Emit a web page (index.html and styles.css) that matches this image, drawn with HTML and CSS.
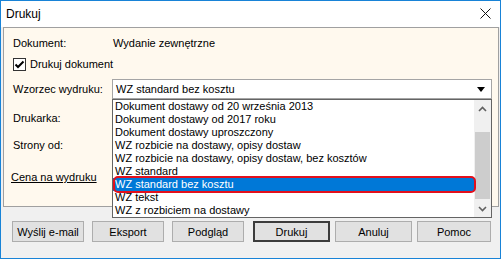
FILE: index.html
```html
<!DOCTYPE html>
<html lang="pl">
<head>
    <meta charset="UTF-8">
    <title>Drukuj</title>
    <link rel="stylesheet" href="styles.css">
</head>
<body>
<div class="window">
    <!-- pasek tytułu -->
    <div class="titlebar">
        <span class="title">Drukuj</span>
        <svg class="close" width="11" height="11" viewBox="0 0 11 11">
            <path d="M0.5 0.5 L10.5 10.5 M10.5 0.5 L0.5 10.5" stroke="#111" stroke-width="1" fill="none"/>
        </svg>
    </div>

    <!-- formularz -->
    <div class="panel">
        <div class="row row-doc">
            <span class="label">Dokument:</span>
            <span class="value">Wydanie zewnętrzne</span>
        </div>
        <div class="row row-check">
            <span class="checkbox">
                <svg width="11" height="11" viewBox="0 0 11 11">
                    <path d="M1.5 5.5 L4 8 L9.5 2.5" stroke="#000" stroke-width="2" fill="none"/>
                </svg>
            </span>
            <span>Drukuj dokument</span>
        </div>
        <div class="row row-template">
            <span class="label">Wzorzec wydruku:</span>
            <div class="combo">
                <span>WZ standard bez kosztu</span>
                <span class="arrow"></span>
            </div>
        </div>
        <div class="row row-printer">
            <span class="label">Drukarka:</span>
        </div>
        <div class="row row-pages">
            <span class="label">Strony od:</span>
        </div>
        <div class="row row-price">
            <span class="link">Cena na wydruku</span>
        </div>

        <!-- rozwinięta lista wzorców -->
        <div class="dropdown">
            <ul class="options">
                <li>Dokument dostawy od 20 września 2013</li>
                <li>Dokument dostawy od 2017 roku</li>
                <li>Dokument dostawy uproszczony</li>
                <li>WZ rozbicie na dostawy, opisy dostaw</li>
                <li>WZ rozbicie na dostawy, opisy dostaw, bez kosztów</li>
                <li>WZ standard</li>
                <li class="selected">WZ standard bez kosztu</li>
                <li>WZ tekst</li>
                <li>WZ z rozbiciem na dostawy</li>
            </ul>
            <div class="scrollbar">
                <span class="scroll-btn">
                    <svg width="9" height="6" viewBox="0 0 9 6">
                        <path d="M1 5 L4.5 1.5 L8 5" stroke="#606060" stroke-width="1.6" fill="none"/>
                    </svg>
                </span>
                <div class="track"><div class="thumb"></div></div>
                <span class="scroll-btn">
                    <svg width="9" height="6" viewBox="0 0 9 6">
                        <path d="M1 1 L4.5 4.5 L8 1" stroke="#606060" stroke-width="1.6" fill="none"/>
                    </svg>
                </span>
            </div>
        </div>
    </div>

    <!-- przyciski -->
    <div class="footer">
        <button class="btn">Wyślij e-mail</button>
        <button class="btn">Eksport</button>
        <button class="btn">Podgląd</button>
        <button class="btn btn-default">Drukuj</button>
        <button class="btn btn-wide">Anuluj</button>
        <button class="btn btn-help">Pomoc</button>
    </div>
</div>
</body>
</html>
```

FILE: styles.css
```css
body {
    margin: 0;
    font-family: "Liberation Sans", Arial, sans-serif;
    font-size: 11px;
    color: #000;
}
.window {
    width: 501px;
    height: 259px;
    box-sizing: border-box;
    border: 1px solid #1883d7;
    background-color: #f0f0f0;
    display: flex;
    flex-direction: column;
}
.titlebar {
    height: 26px;
    background-color: #fff;
    display: flex;
    align-items: center;
    justify-content: space-between;
    padding: 0 9px 0 5px;
}
.title {
    font-size: 12px;
}
.close {
    margin-top: -1px;
}
.panel {
    position: relative;
    height: 180px;
    box-sizing: border-box;
    margin: 0 1px 0 2px;
    border: 1px solid #a0a0a0;
    background-color: #fff9ee;
    padding: 7px 0 0 9px;
    display: flex;
    flex-direction: column;
}
.row {
    display: flex;
    align-items: center;
    height: 16px;
}
.label {
    width: 99px;
    flex-shrink: 0;
}
.value {
    margin-left: 1px;
}
.row-check {
    margin-top: 5px;
}
.row-template {
    margin-top: 7px;
    height: 20px;
}
.row-printer {
    margin-top: 11px;
}
.row-pages {
    margin-top: 11px;
}
.row-price {
    margin-top: 16px;
}
.checkbox {
    width: 13px;
    height: 13px;
    box-sizing: border-box;
    border: 1px solid #333;
    background-color: #fff;
    display: flex;
    align-items: center;
    justify-content: center;
    margin-right: 4px;
}
.combo {
    width: 380px;
    height: 20px;
    box-sizing: border-box;
    border: 1px solid #a5a5a5;
    background-color: #fff;
    display: flex;
    align-items: center;
    justify-content: space-between;
    padding: 0 6px 0 3px;
}
.arrow {
    width: 0;
    height: 0;
    border-left: 4px solid transparent;
    border-right: 4px solid transparent;
    border-top: 5px solid #000;
}
.link {
    margin-left: -2px;
    text-decoration: underline;
}
.dropdown {
    position: absolute;
    left: 108px;
    top: 71px;
    width: 380px;
    height: 119px;
    box-sizing: border-box;
    border: 1px solid #646464;
    background-color: #fff;
    display: flex;
}
.options {
    list-style: none;
    margin: 0;
    padding: 0;
    flex: 1;
}
.options li {
    position: relative;
    height: 13px;
    line-height: 13px;
    padding-left: 2px;
    white-space: nowrap;
}
.options li.selected {
    background-color: #0078d7;
    color: #fff;
}
.options li.selected::after {
    content: "";
    position: absolute;
    left: 0;
    right: -2px;
    top: -2px;
    bottom: -2px;
    border: 2px solid #e3101c;
    border-radius: 5px;
}
.scrollbar {
    width: 17px;
    background-color: #f0f0f0;
    display: flex;
    flex-direction: column;
}
.scroll-btn {
    height: 17px;
    display: flex;
    align-items: center;
    justify-content: center;
}
.track {
    flex: 1;
    padding-top: 15px;
}
.thumb {
    height: 67px;
    margin: 0 1px;
    background-color: #cdcdcd;
}
.footer {
    display: flex;
    padding: 14px 0 0 11px;
}
.btn {
    width: 72px;
    height: 21px;
    box-sizing: border-box;
    margin-right: 8px;
    border: 1px solid #adadad;
    background-color: #e1e1e1;
    font-family: "Liberation Sans", Arial, sans-serif;
    font-size: 11px;
    color: #000;
    padding: 0;
}
.btn-default {
    width: 77px;
    margin-left: 1px;
    margin-right: 5px;
    border: 2px solid #3c3c3c;
}
.btn-wide {
    width: 77px;
    margin-right: 5px;
}
.btn-help {
    width: 74px;
    margin-right: 0;
}
```
